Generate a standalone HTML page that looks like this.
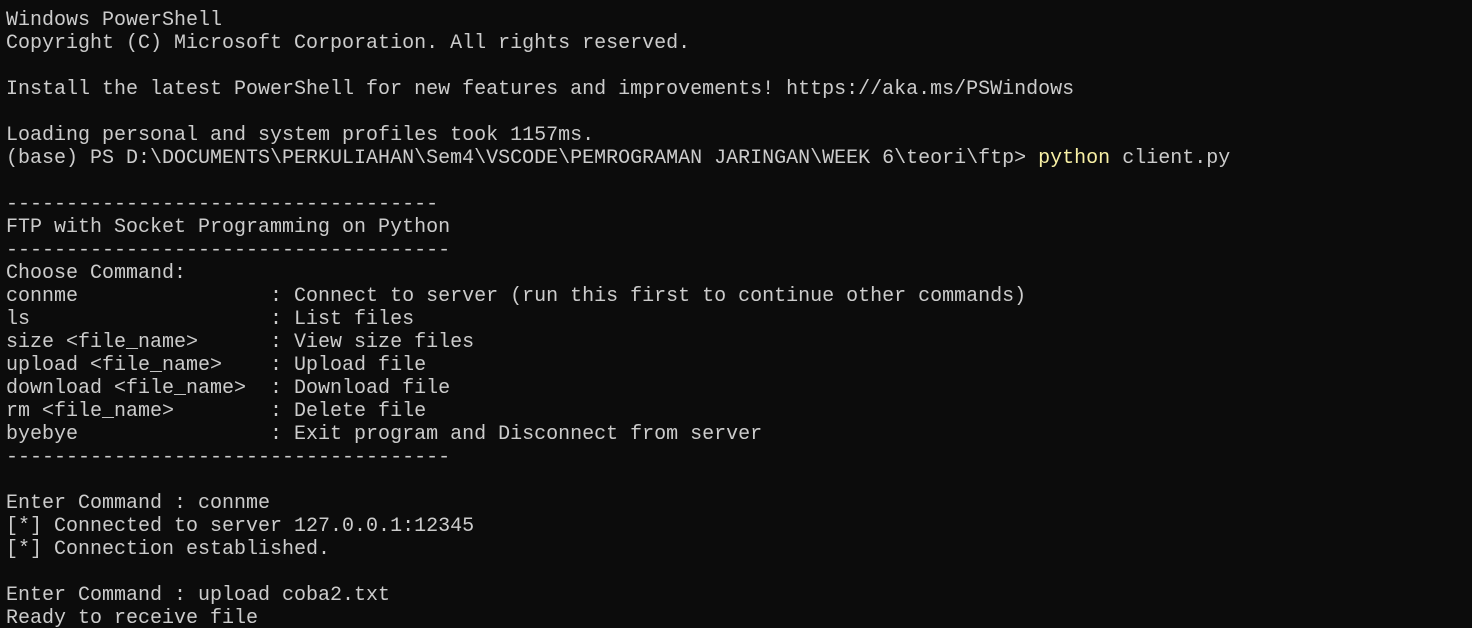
<!DOCTYPE html>
<html><head><meta charset="utf-8"><style>
html,body{margin:0;padding:0;background:#0c0c0c;width:1472px;height:628px;overflow:hidden}
pre{margin:0;padding:9px 0 0 6px;font-family:"Liberation Mono",monospace;font-size:20px;line-height:23px;color:#cccccc;white-space:pre}
.y{color:#f9f1a5}
</style></head><body><pre>Windows PowerShell
Copyright (C) Microsoft Corporation. All rights reserved.

Install the latest PowerShell for new features and improvements! https://aka.ms/PSWindows

Loading personal and system profiles took 1157ms.
(base) PS D:\DOCUMENTS\PERKULIAHAN\Sem4\VSCODE\PEMROGRAMAN JARINGAN\WEEK 6\teori\ftp&gt; <span class="y">python</span> client.py

------------------------------------
FTP with Socket Programming on Python
-------------------------------------
Choose Command:
connme                : Connect to server (run this first to continue other commands)
ls                    : List files
size &lt;file_name&gt;      : View size files
upload &lt;file_name&gt;    : Upload file
download &lt;file_name&gt;  : Download file
rm &lt;file_name&gt;        : Delete file
byebye                : Exit program and Disconnect from server
-------------------------------------

Enter Command : connme
[*] Connected to server 127.0.0.1:12345
[*] Connection established.

Enter Command : upload coba2.txt
Ready to receive file</pre></body></html>
